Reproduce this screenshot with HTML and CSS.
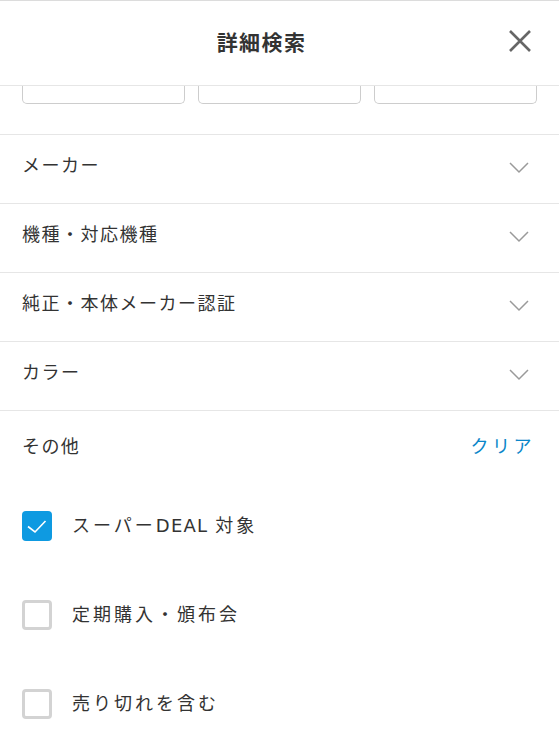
FILE: index.html
```html
<!DOCTYPE html>
<html lang="ja">
<head>
<meta charset="utf-8">
<link rel="stylesheet" href="styles.css">
</head>
<body>
<div class="panel">
  <header class="header">
    <h1 class="title">詳細検索</h1>
    <button class="close" aria-label="閉じる">
      <svg width="24" height="24" viewBox="0 0 24 24"><path d="M2 2 L22 22 M22 2 L2 22" stroke="#666" stroke-width="2.6" fill="none"/></svg>
    </button>
  </header>
  <div class="inputs">
    <div class="box"></div>
    <div class="box"></div>
    <div class="box"></div>
  </div>
  <ul class="rows">
    <li class="row"><span>メーカー</span><svg class="chev" width="20" height="12" viewBox="0 0 20 12"><path d="M1 1 L10 10 L19 1" stroke="#9a9a9a" stroke-width="1.5" fill="none"/></svg></li>
    <li class="row"><span>機種・対応機種</span><svg class="chev" width="20" height="12" viewBox="0 0 20 12"><path d="M1 1 L10 10 L19 1" stroke="#9a9a9a" stroke-width="1.5" fill="none"/></svg></li>
    <li class="row"><span>純正・本体メーカー認証</span><svg class="chev" width="20" height="12" viewBox="0 0 20 12"><path d="M1 1 L10 10 L19 1" stroke="#9a9a9a" stroke-width="1.5" fill="none"/></svg></li>
    <li class="row"><span>カラー</span><svg class="chev" width="20" height="12" viewBox="0 0 20 12"><path d="M1 1 L10 10 L19 1" stroke="#9a9a9a" stroke-width="1.5" fill="none"/></svg></li>
  </ul>
  <section class="other">
    <div class="other-head"><span>その他</span><a class="clear">クリア</a></div>
    <label class="check"><span class="cb on"><svg width="30" height="30" viewBox="0 0 30 30"><path d="M6 15.5 L13 21 L23.5 10" stroke="#fff" stroke-width="1.6" fill="none"/></svg></span><span class="lbl">スーパー<span class="latin">DEAL</span> 対象</span></label>
    <label class="check"><span class="cb"></span><span class="lbl">定期購入・頒布会</span></label>
    <label class="check"><span class="cb"></span><span class="lbl">売り切れを含む</span></label>
  </section>
</div>
</body>
</html>
```

FILE: styles.css
```css
* { box-sizing: border-box; }
html, body { margin: 0; padding: 0; background: #fff; }
body {
  font-family: "Noto Sans CJK JP", "Noto Sans", sans-serif;
  color: #333;
  overflow: hidden;
  height: 736px;
}
.panel { width: 559px; border-top: 1px solid #dcdcdc; }
.header {
  display: grid;
  grid-template-columns: 1fr;
  align-items: center;
  height: 85px;
  border-bottom: 1px solid #e6e6e6;
}
.title {
  grid-area: 1 / 1;
  margin: 0;
  padding-right: 36px;
  text-align: center;
  font-size: 21px;
  font-weight: 700;
  letter-spacing: 1.4px;
  color: #333;
  line-height: 1;
  margin-top: -4px;
}
.close {
  grid-area: 1 / 1;
  justify-self: end;
  margin-right: 27px;
  margin-top: -4px;
  width: 24px; height: 24px;
  padding: 0; border: 0; background: none;
  display: flex;
}
.inputs {
  display: flex;
  gap: 13px;
  padding: 0 22px;
  height: 49px;
  border-bottom: 1px solid #e6e6e6;
}
.box {
  flex: 1;
  height: 18px;
  border: 1px solid #cdcdcd;
  border-top: 0;
  border-radius: 0 0 5px 5px;
}
.rows { list-style: none; margin: 0; padding: 0; }
.row {
  display: flex;
  align-items: center;
  justify-content: space-between;
  height: 69px;
  padding: 0 30px 10px 22px;
  border-bottom: 1px solid #e6e6e6;
  font-size: 18px;
  letter-spacing: 1.5px;
}
.chev { margin-top: 8px; }
.other { padding: 0 27px 0 22px; }
.other-head {
  display: flex;
  justify-content: space-between;
  align-items: center;
  height: 70px;
  font-size: 18px;
  letter-spacing: 1.4px;
  padding-bottom: 2px;
}
.clear { color: #0a86c9; letter-spacing: 3.5px; margin-right: -3px; }
.check {
  display: flex;
  align-items: center;
  gap: 20px;
  height: 30px;
  margin-top: 30px;
  margin-bottom: 59px;
  font-size: 18px;
  letter-spacing: 3px;
}
.check + .check { margin-top: 0; }
.lbl { padding-bottom: 5px; }
.latin { font-family: "DejaVu Sans", sans-serif; font-size: 18px; letter-spacing: 1.2px; }
.cb {
  width: 30px; height: 30px;
  border: 3px solid #d3d3d3;
  border-radius: 4px;
  flex: none;
  display: flex;
}
.cb.on { background: #0e9ae1; border: 0; }
```
